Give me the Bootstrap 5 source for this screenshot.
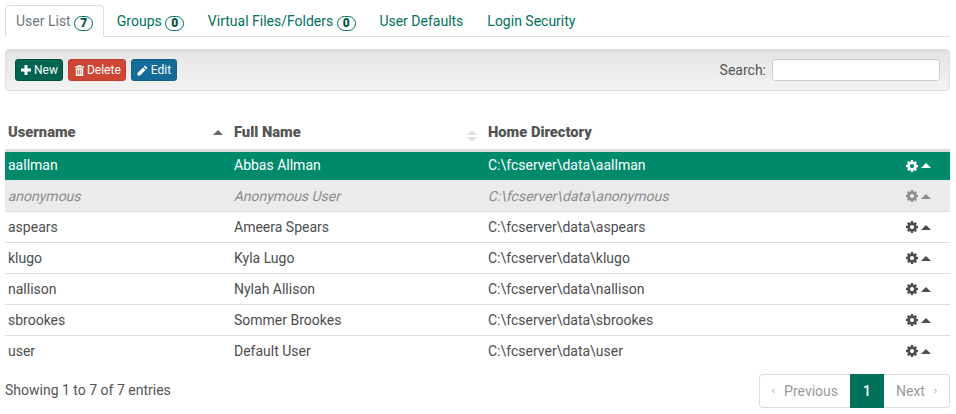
<!DOCTYPE html>
<html lang="en">
<head>
<meta charset="utf-8">
<title>User List</title>
<link href="https://cdn.jsdelivr.net/npm/bootstrap@5.3.0/dist/css/bootstrap.min.css" rel="stylesheet">
<style>
html,body{height:100%;overflow:hidden}
body{font-family:Roboto,"Liberation Sans",sans-serif;font-size:14px;color:#4d4d4d;background:#fff}
.page-wrap{padding:5px 6px 0 5px}
.tabs-bar{border-bottom:1px solid #ddd;height:32px;flex-wrap:nowrap;gap:2px}
.tabs-bar .nav-link{font-size:14px;line-height:20px;height:32px;padding:5px 10px;color:#007060;border:1px solid transparent;border-radius:4px 4px 0 0;margin:0;white-space:nowrap}
.tabs-bar .nav-link.active{color:#6b7780;background:#fff;border-color:#ddd #ddd #fff}
.tab-count{display:inline-block;border:1px solid #00705a;border-radius:9px;font-size:12px;font-weight:900;line-height:11px;padding:1px 5px;color:#00573f;vertical-align:-1px;margin-right:-.35px}
.tool-bar{margin-top:12px;height:42px;padding:0 9px;background:linear-gradient(#e4e4e4,#f3f3f3);border:1px solid #e0e0e0;border-radius:4px;box-shadow:inset 0 1px 2px rgba(0,0,0,.06)}
.btn-group-gap{gap:5px}
.act-btn{font-size:12px;line-height:16px;height:22px;padding:2px 5px;border-radius:3px;color:#fff;display:inline-flex;align-items:center;gap:3px;border:1px solid transparent;text-decoration:none}
.act-btn:hover{color:#fff}
.act-new{background:#00634f;border-color:#00523f;padding-right:4px}
.act-del{background:#cf4534;border-color:#c03c2c;padding-left:6px;padding-right:4px}
.act-edit{background:#136c98;border-color:#0f5f87}
.search-lbl{font-size:14px;color:#555;margin:0 6px 0 0}
.search-box{width:168px;height:22px;border:1px solid #ccc;border-radius:3px;background:#fff;padding:0 4px;font-size:13px;box-shadow:inset 0 1px 1px rgba(0,0,0,.05)}
.users{margin:25px 0 0;width:945px;table-layout:fixed;border-collapse:collapse;color:#4d4d4d}
.users th,.users td{padding:0 3px;font-size:14px;vertical-align:middle;white-space:nowrap;box-shadow:none;background:transparent;color:inherit}
.users thead th{height:34px;font-size:14.7px;font-weight:900;border-bottom:3px solid #ddd;color:#555;position:relative}
.users tbody td{height:31px;border-bottom:1px solid #ddd;padding-top:1px}
.users tbody tr:last-child td{border-bottom:0}
.users tbody tr.row-on td{background:#008a6c;color:#fff;height:30px;border-bottom:0;padding-top:0}
.users tbody tr.row-off td{background:#ebebeb;color:#8c8c8c;padding-top:2px}
.faux-slant{display:inline-block;transform:skewX(-14deg);transform-origin:0 65%}
.sort-mark{position:absolute;right:8px;top:14px;width:0;height:0;border-left:5px solid transparent;border-right:5px solid transparent;border-bottom:5px solid #666}
.sort-mark.dim{border-bottom-color:#ddd}
.sort-mark.dim::after{content:"";position:absolute;left:-5px;top:7px;width:0;height:0;border-left:5px solid transparent;border-right:5px solid transparent;border-top:5px solid #ddd}
.row-tools{display:flex;justify-content:flex-end;align-items:center;gap:3px;padding-right:16px;color:#4d4d4d}
.row-on .row-tools{color:#fff}
.row-off .row-tools{color:#8c8c8c}
.caret-up{width:0;height:0;border-left:5px solid transparent;border-right:5px solid transparent;border-bottom:5px solid currentColor}
.foot-row{margin-top:8px}
.foot-info{font-size:14px;color:#555;padding-bottom:2px}
.pager{margin:0;width:191px;height:34px}
.pager .page-link{font-size:14px;line-height:20px;padding:6px 12px;height:34px;color:#999;border-color:#ddd;background:#fff;white-space:nowrap;display:flex;align-items:center}
.pager .page-item .page-link,.pager .page-item:not(:first-child) .page-link{margin:0}
.pager .page-item:first-child .page-link{border-radius:4px 0 0 4px;width:91px;border-right:0;gap:9px}
.pager .page-item:last-child .page-link{border-radius:0 4px 4px 0;width:66px;border-left:0;gap:9px;padding-left:12px}
.pager .page-item.active .page-link{background:#00705a;border-color:#00705a;color:#fff;width:34px;font-weight:500;justify-content:center;padding:6px 0}
.pager-chev{fill:none;stroke:#8a8a8a;stroke-width:1.600}
</style>
</head>
<body>
<svg width="0" height="0" class="d-none">
<symbol id="gear" viewBox="0 -128 1536 1536"><path fill="currentColor" d="M1024 640q0-106-75-181t-181-75-181 75-75 181 75 181 181 75 181-75 75-181zm512-109v222q0 12-8 23t-20 13l-185 28q-19 54-39 91 35 50 107 138 10 12 10 25t-9 23q-27 37-99 108t-94 71q-12 0-26-9l-138-108q-44 23-91 38-16 136-29 186-7 28-36 28h-222q-14 0-24.500-8.500t-11.500-21.500l-28-184q-49-16-90-37l-141 107q-10 9-25 9-14 0-25-11-126-114-165-168-7-10-7-23 0-12 8-23 15-21 51-66.500t54-70.500q-27-50-41-99l-183-27q-13-2-21-12.500t-8-23.500v-222q0-12 8-23t19-13l186-28q14-46 39-92-40-57-107-138-10-12-10-24 0-10 9-23 26-36 98.500-107.500t94.500-71.500q13 0 26 10l138 107q44-23 91-38 16-136 29-186 7-28 36-28h222q14 0 24.500 8.500t11.500 21.500l28 184q49 16 90 37l142-107q9-9 24-9 13 0 25 10 129 119 165 170 7 8 7 22 0 12-8 23-15 21-51 66.500t-54 70.500q26 50 41 98l183 28q13 2 21 12.500t8 23.500z"/></symbol>
</svg>
<div class="page-wrap">
  <ul class="nav tabs-bar">
    <li class="nav-item"><a class="nav-link active" href="#">User List <span class="tab-count">7</span></a></li>
    <li class="nav-item"><a class="nav-link" href="#">Groups <span class="tab-count">0</span></a></li>
    <li class="nav-item"><a class="nav-link" href="#">Virtual Files/Folders <span class="tab-count">0</span></a></li>
    <li class="nav-item"><a class="nav-link" href="#">User Defaults</a></li>
    <li class="nav-item"><a class="nav-link" href="#">Login Security</a></li>
  </ul>
  <div class="tool-bar d-flex align-items-center justify-content-between">
    <div class="d-flex btn-group-gap">
      <a class="act-btn act-new" href="#"><svg width="10" height="10" viewBox="0 0 10 10"><path fill="#fff" d="M3.500 0h3v3.500H10v3H6.500V10h-3V6.500H0v-3h3.500z"/></svg>New</a>
      <a class="act-btn act-del" href="#"><svg width="9" height="11" viewBox="0 0 9 11"><path fill="#fff" d="M3 0h3l.5 1.200H9v1.300H0V1.200h2.500zM.8 3.200h7.400V11H.8zM2.300 4.500v5h.9v-5zm2 0v5h.9v-5zm2 0v5h.5v-5z" fill-rule="evenodd"/></svg>Delete</a>
      <a class="act-btn act-edit" href="#"><svg width="11" height="11" viewBox="0 0 11 11"><path fill="#fff" d="M8 .5l2.500 2.500-1.200 1.200-2.500-2.500zM6.100 2.400l2.500 2.500L3 10.500H.5V8z"/></svg>Edit</a>
    </div>
    <div class="d-flex align-items-center">
      <label class="search-lbl" for="q">Search:</label>
      <input id="q" class="search-box" type="text">
    </div>
  </div>
  <table class="users table-borderless">
    <colgroup><col style="width:226px"><col style="width:254px"><col style="width:340px"><col></colgroup>
    <thead>
      <tr><th>Username<span class="sort-mark"></span></th><th>Full Name<span class="sort-mark dim"></span></th><th>Home Directory</th><th></th></tr>
    </thead>
    <tbody>
      <tr class="row-on"><td>aallman</td><td>Abbas Allman</td><td>C:\fcserver\data\aallman</td><td><div class="row-tools"><svg width="12" height="12"><use href="#gear"/></svg><span class="caret-up"></span></div></td></tr>
      <tr class="row-off"><td><span class="faux-slant">anonymous</span></td><td><span class="faux-slant">Anonymous User</span></td><td><span class="faux-slant">C:\fcserver\data\anonymous</span></td><td><div class="row-tools"><svg width="12" height="12"><use href="#gear"/></svg><span class="caret-up"></span></div></td></tr>
      <tr><td>aspears</td><td>Ameera Spears</td><td>C:\fcserver\data\aspears</td><td><div class="row-tools"><svg width="12" height="12"><use href="#gear"/></svg><span class="caret-up"></span></div></td></tr>
      <tr><td>klugo</td><td>Kyla Lugo</td><td>C:\fcserver\data\klugo</td><td><div class="row-tools"><svg width="12" height="12"><use href="#gear"/></svg><span class="caret-up"></span></div></td></tr>
      <tr><td>nallison</td><td>Nylah Allison</td><td>C:\fcserver\data\nallison</td><td><div class="row-tools"><svg width="12" height="12"><use href="#gear"/></svg><span class="caret-up"></span></div></td></tr>
      <tr><td>sbrookes</td><td>Sommer Brookes</td><td>C:\fcserver\data\sbrookes</td><td><div class="row-tools"><svg width="12" height="12"><use href="#gear"/></svg><span class="caret-up"></span></div></td></tr>
      <tr><td>user</td><td>Default User</td><td>C:\fcserver\data\user</td><td><div class="row-tools"><svg width="12" height="12"><use href="#gear"/></svg><span class="caret-up"></span></div></td></tr>
    </tbody>
  </table>
  <div class="foot-row d-flex justify-content-between align-items-center">
    <div class="foot-info">Showing 1 to 7 of 7 entries</div>
    <ul class="pagination pager">
      <li class="page-item"><a class="page-link" href="#"><svg width="6" height="10" viewBox="0 0 6 10"><path class="pager-chev" d="M5 1L1 5l4 4"/></svg>Previous</a></li>
      <li class="page-item active"><a class="page-link" href="#">1</a></li>
      <li class="page-item"><a class="page-link" href="#">Next<svg width="6" height="10" viewBox="0 0 6 10"><path class="pager-chev" d="M1 1l4 4-4 4"/></svg></a></li>
    </ul>
  </div>
</div>
<script src="https://cdn.jsdelivr.net/npm/bootstrap@5.3.0/dist/js/bootstrap.bundle.min.js"></script>
</body>
</html>
